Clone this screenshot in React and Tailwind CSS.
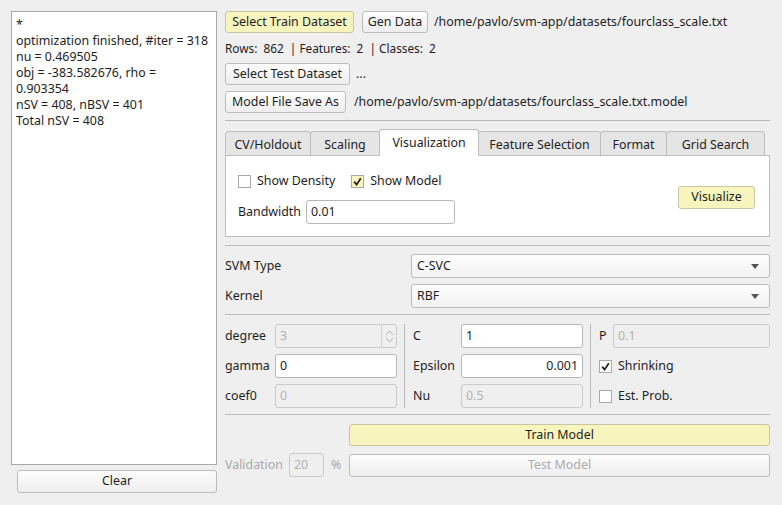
import React from 'react';

const btn = 'h-[22px] px-[7px] rounded-[3px] border border-[#bcbcbc] bg-gradient-to-b from-[#fdfdfd] to-[#eeeeee] text-[12.4px] text-[#1e1e1e] flex items-center justify-center whitespace-nowrap';
const yellowBtn = 'h-[22px] px-[7px] rounded-[3px] border border-[#c9c7a3] bg-[#f7f5bd] text-[12.4px] text-[#1e1e1e] flex items-center justify-center whitespace-nowrap';
const input = 'h-[24px] rounded-[3px] border border-[#b7b7b7] bg-white px-[4px] text-[12.4px] text-[#1e1e1e] flex items-center';
const disabledInput = 'h-[24px] rounded-[3px] border border-[#cbcbcb] bg-[#efefef] px-[4px] text-[12.4px] text-[#b2b2b2] flex items-center';

const Check = ({ checked, yellow }) => (
    <span className={`w-[13px] h-[13px] border border-[#a9a9a9] flex items-center justify-center ${yellow ? 'bg-[#f7f5bd]' : 'bg-white'}`}>
        {checked && (
            <svg width="9" height="9" viewBox="0 0 9 9">
                <path d="M1.2 4.6 L3.6 7.6 L7.8 1.2" fill="none" stroke="#1e1e1e" strokeWidth="1.7" />
            </svg>
        )}
    </span>
);

const Combo = ({ value }) => (
    <div className="h-[24px] flex-1 rounded-[3px] border border-[#bcbcbc] bg-gradient-to-b from-[#fdfdfd] to-[#f2f2f2] flex items-center justify-between pl-[5px] pr-[10px]">
        <span>{value}</span>
        <svg width="8" height="5" viewBox="0 0 8 5"><path d="M0 0 H8 L4 5 Z" fill="#555" /></svg>
    </div>
);

const Sep = () => <div className="h-px bg-[#b9b9b9] w-full" />;

const tabs = [
    ['CV/Holdout', 'w-[86px]'],
    ['Scaling', 'w-[70px]'],
    ['Visualization', 'w-[100px]'],
    ['Feature Selection', 'w-[123px]'],
    ['Format', 'w-[67px]'],
    ['Grid Search', 'w-[99px]'],
];

const App = () => {
    return (
        <div className="w-[782px] h-[505px] bg-[#efefef] flex font-['Noto_Sans',sans-serif] text-[12.4px] text-[#1e1e1e] overflow-hidden">
            {/* Log panel */}
            <div className="ml-[11px] mt-[11px] w-[206px] flex flex-col">
                <div className="h-[454px] bg-white border border-[#a9a9a9] px-[4px] pt-[5px] leading-[16px]">
                    <div>*</div>
                    <div>optimization finished, #iter = 318</div>
                    <div>nu = 0.469505</div>
                    <div>obj = -383.582676, rho =</div>
                    <div>0.903354</div>
                    <div>nSV = 408, nBSV = 401</div>
                    <div>Total nSV = 408</div>
                </div>
                <div className="mt-[5px] ml-[6px]">
                    <div className={`${btn} w-[200px] h-[23px]`}>Clear</div>
                </div>
            </div>

            {/* Main column */}
            <div className="ml-[8px] mt-[11px] w-[545px] flex flex-col">
                <div className="flex items-center">
                    <div className={`${yellowBtn} w-[129px]`}>Select Train Dataset</div>
                    <div className={`${btn} w-[66px] ml-[8px]`}>Gen Data</div>
                    <span className="ml-[6px] whitespace-nowrap">/home/pavlo/svm-app/datasets/fourclass_scale.txt</span>
                </div>
                <div className="h-[30px] flex items-center pt-[2px] text-[11.8px] whitespace-pre">
                    Rows:  862  | Features:  2  | Classes:  2
                </div>
                <div className="flex items-center">
                    <div className={`${btn} w-[125px]`}>Select Test Dataset</div>
                    <span className="ml-[6px]">...</span>
                </div>
                <div className="flex items-center mt-[6px]">
                    <div className={`${btn} w-[121px]`}>Model File Save As</div>
                    <span className="ml-[8px] whitespace-nowrap">/home/pavlo/svm-app/datasets/fourclass_scale.txt.model</span>
                </div>
                <div className="mt-[7px]"><Sep /></div>

                {/* Tabs */}
                <div className="mt-[8px] flex items-end h-[27px]">
                    {tabs.map(([t, w]) => {
                        const active = t === 'Visualization';
                        return (
                            <div
                                key={t}
                                className={`${w} flex items-center justify-center border border-[#bdbdbd] rounded-t-[3px] -mr-px last:mr-0 ${active ? 'h-[27px] pt-[1px] bg-white border-b-white z-10 relative' : 'h-[25px] pt-[3px] bg-[#e5e5e5]'}`}
                            >
                                {t}
                            </div>
                        );
                    })}
                </div>
                <div className="h-[82px] bg-white border border-[#bdbdbd] -mt-px flex items-start justify-between pl-[12px] pr-[14px]">
                    <div className="flex flex-col gap-[10px] mt-[17px]">
                        <div className="flex items-center h-[17px]">
                            <Check />
                            <span className="ml-[6px]">Show Density</span>
                            <span className="ml-[16px]"><Check checked yellow /></span>
                            <span className="ml-[6px]">Show Model</span>
                        </div>
                        <div className="flex items-center">
                            <span>Bandwidth</span>
                            <div className={`${input} w-[149px] ml-[5px]`}>0.01</div>
                        </div>
                    </div>
                    <div className={`${yellowBtn} w-[77px] h-[23px] mt-[30px]`}>Visualize</div>
                </div>

                <div className="mt-[8px]"><Sep /></div>

                {/* SVM type / kernel */}
                <div className="mt-[8px] flex items-center">
                    <span className="w-[186px]">SVM Type</span>
                    <Combo value="C-SVC" />
                </div>
                <div className="mt-[6px] flex items-center">
                    <span className="w-[186px]">Kernel</span>
                    <Combo value="RBF" />
                </div>
                <div className="mt-[6px]"><Sep /></div>

                {/* Parameters */}
                <div className="mt-[9px] flex">
                    <div className="flex flex-col gap-[6px] w-[172px]">
                        <div className="flex items-center">
                            <span className="w-[50px]">degree</span>
                            <div className="h-[24px] w-[122px] rounded-[3px] border border-[#cbcbcb] bg-[#efefef] flex items-center text-[#b2b2b2]">
                                <span className="flex-1 px-[4px]">3</span>
                                <div className="w-[15px] h-full border-l border-[#cfcfcf] flex flex-col items-center justify-center gap-[3px]">
                                    <svg width="7" height="4" viewBox="0 0 7 4"><path d="M0 4 L3.5 0 L7 4" fill="none" stroke="#b5b5b5" /></svg>
                                    <svg width="7" height="4" viewBox="0 0 7 4"><path d="M0 0 L3.5 4 L7 0" fill="none" stroke="#b5b5b5" /></svg>
                                </div>
                            </div>
                        </div>
                        <div className="flex items-center">
                            <span className="w-[50px]">gamma</span>
                            <div className={`${input} w-[122px]`}>0</div>
                        </div>
                        <div className="flex items-center">
                            <span className="w-[50px]">coef0</span>
                            <div className={`${disabledInput} w-[122px]`}>0</div>
                        </div>
                    </div>
                    <div className="w-px bg-[#b9b9b9] ml-[7px]" />
                    <div className="ml-[8px] flex flex-col gap-[6px] w-[170px]">
                        <div className="flex items-center">
                            <span className="w-[48px]">C</span>
                            <div className={`${input} w-[122px]`}>1</div>
                        </div>
                        <div className="flex items-center">
                            <span className="w-[48px]">Epsilon</span>
                            <div className={`${input} w-[122px] justify-end`}>0.001</div>
                        </div>
                        <div className="flex items-center">
                            <span className="w-[48px]">Nu</span>
                            <div className={`${disabledInput} w-[122px]`}>0.5</div>
                        </div>
                    </div>
                    <div className="w-px bg-[#b9b9b9] ml-[7px]" />
                    <div className="ml-[8px] flex-1 flex flex-col gap-[6px]">
                        <div className="flex items-center">
                            <span className="w-[14px]">P</span>
                            <div className={`${disabledInput} flex-1`}>0.1</div>
                        </div>
                        <div className="h-[24px] flex items-center">
                            <Check checked />
                            <span className="ml-[6px]">Shrinking</span>
                        </div>
                        <div className="h-[24px] flex items-center">
                            <Check />
                            <span className="ml-[6px]">Est. Prob.</span>
                        </div>
                    </div>
                </div>
                <div className="mt-[6px]"><Sep /></div>

                {/* Train / test */}
                <div className="mt-[9px] flex">
                    <div className={`${yellowBtn} ml-[124px] flex-1`}>Train Model</div>
                </div>
                <div className="mt-[7px] flex items-center">
                    <span className="text-[#a8a8a8] w-[64px]">Validation</span>
                    <div className={`${disabledInput} w-[35px] h-[23px]`}>20</div>
                    <span className="ml-[7px] w-[18px] text-[#a8a8a8]">%</span>
                    <div className={`${btn} flex-1 h-[23px] text-[#ababab]`}>Test Model</div>
                </div>
            </div>
        </div>
    );
};

export default App;
